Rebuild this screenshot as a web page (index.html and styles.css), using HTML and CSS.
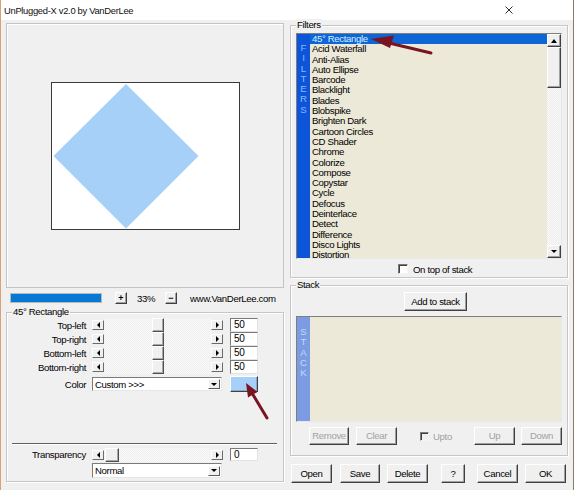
FILE: index.html
```html
<!DOCTYPE html>
<html>
<head>
<meta charset="utf-8">
<title>UnPlugged-X</title>
<link rel="stylesheet" href="styles.css">
</head>
<body>
<div class="window">
  <div class="titlebar">
    <span class="title">UnPlugged-X v2.0 by VanDerLee</span>
    <svg class="close" width="8" height="8" viewBox="0 0 8 8"><path d="M0.5 0.5 L7.5 7.5 M7.5 0.5 L0.5 7.5" stroke="#2b2b2b" stroke-width="1"/></svg>
  </div>
  <div class="main">
    <div class="left">
      <div class="preview">
        <div class="canvas">
          <svg width="187" height="146" viewBox="0 0 187 146"><polygon points="74,1 146.5,73 74,145.5 1.5,73" fill="#a7d0f8"/></svg>
        </div>
      </div>
      <div class="zoomrow">
        <div class="progress"></div>
        <div class="btn tiny plus">+</div>
        <span class="pct">33%</span>
        <div class="btn tiny minus">−</div>
        <span class="url">www.VanDerLee.com</span>
      </div>
      <div class="group params">
        <span class="legend">45° Rectangle</span>
        <div class="row">
          <span class="lbl">Top-left</span>
          <div class="slider"><div class="arr"><i class="tri-l"></i></div><div class="track"><div class="thumb mid"></div></div><div class="arr"><i class="tri-r"></i></div></div>
          <div class="edit">50</div>
        </div>
        <div class="row">
          <span class="lbl">Top-right</span>
          <div class="slider"><div class="arr"><i class="tri-l"></i></div><div class="track"><div class="thumb mid"></div></div><div class="arr"><i class="tri-r"></i></div></div>
          <div class="edit">50</div>
        </div>
        <div class="row">
          <span class="lbl">Bottom-left</span>
          <div class="slider"><div class="arr"><i class="tri-l"></i></div><div class="track"><div class="thumb mid"></div></div><div class="arr"><i class="tri-r"></i></div></div>
          <div class="edit">50</div>
        </div>
        <div class="row">
          <span class="lbl">Bottom-right</span>
          <div class="slider"><div class="arr"><i class="tri-l"></i></div><div class="track"><div class="thumb mid"></div></div><div class="arr"><i class="tri-r"></i></div></div>
          <div class="edit">50</div>
        </div>
        <div class="row colorrow">
          <span class="lbl">Color</span>
          <div class="combo"><span class="combo-text">Custom &gt;&gt;&gt;</span><div class="drop"><i class="tri-d"></i></div></div>
          <div class="swatch"></div>
        </div>
        <div class="sep"></div>
        <div class="row transrow">
          <span class="lbl">Transparency</span>
          <div class="slider"><div class="arr"><i class="tri-l"></i></div><div class="track"><div class="thumb start"></div></div><div class="arr"><i class="tri-r"></i></div></div>
          <div class="edit">0</div>
        </div>
        <div class="combo blend"><span class="combo-text">Normal</span><div class="drop"><i class="tri-d"></i></div></div>
      </div>
    </div>

    <div class="right">
      <div class="group filters">
        <span class="legend">Filters</span>
        <div class="list">
          <div class="bar filters-bar"><span>F</span><span>I</span><span>L</span><span>T</span><span>E</span><span>R</span><span>S</span></div>
          <div class="items">
            <div class="item sel">45° Rectangle</div>
            <div class="item">Acid Waterfall</div>
            <div class="item">Anti-Alias</div>
            <div class="item">Auto Ellipse</div>
            <div class="item">Barcode</div>
            <div class="item">Blacklight</div>
            <div class="item">Blades</div>
            <div class="item">Blobspike</div>
            <div class="item">Brighten Dark</div>
            <div class="item">Cartoon Circles</div>
            <div class="item">CD Shader</div>
            <div class="item">Chrome</div>
            <div class="item">Colorize</div>
            <div class="item">Compose</div>
            <div class="item">Copystar</div>
            <div class="item">Cycle</div>
            <div class="item">Defocus</div>
            <div class="item">Deinterlace</div>
            <div class="item">Detect</div>
            <div class="item">Difference</div>
            <div class="item">Disco Lights</div>
            <div class="item">Distortion</div>
          </div>
          <div class="scrollbar">
            <div class="sb-btn"><i class="tri-u"></i></div>
            <div class="sb-thumb"></div>
            <div class="sb-track"></div>
            <div class="sb-btn"><i class="tri-d"></i></div>
          </div>
        </div>
        <div class="checkrow ontop"><span class="check"></span><span>On top of stack</span></div>
      </div>

      <div class="group stack">
        <span class="legend">Stack</span>
        <div class="btn addbtn">Add to stack</div>
        <div class="list stacklist">
          <div class="bar stack-bar"><span>S</span><span>T</span><span>A</span><span>C</span><span>K</span></div>
          <div class="items"></div>
        </div>
        <div class="stackbtns">
          <div class="btn dis remove">Remove</div>
          <div class="btn dis clear">Clear</div>
          <div class="checkrow upto"><span class="check dis"></span><span class="distext">Upto</span></div>
          <div class="btn dis up">Up</div>
          <div class="btn dis down">Down</div>
        </div>
      </div>

      <div class="bottombtns">
        <div class="btn b-open">Open</div>
        <div class="btn b-save">Save</div>
        <div class="btn b-delete">Delete</div>
        <div class="btn b-help">?</div>
        <div class="btn b-cancel">Cancel</div>
        <div class="btn b-ok">OK</div>
      </div>
    </div>
  </div>

  <svg class="arrows" width="574" height="490" viewBox="0 0 574 490">
    <line x1="431" y1="53" x2="389" y2="43" stroke="#7a1420" stroke-width="3" stroke-linecap="round"/>
    <polygon points="371,39 394,35.5 390,48" fill="#7a1420"/>
    <line x1="267" y1="418" x2="252" y2="393" stroke="#7a1420" stroke-width="3" stroke-linecap="round"/>
    <polygon points="246,383 257.5,392 248,397.5" fill="#7a1420"/>
  </svg>
</div>
</body>
</html>
```

FILE: styles.css
```css
* { box-sizing: border-box; }
html, body { margin: 0; padding: 0; }
body {
  width: 574px;
  height: 490px;
  overflow: hidden;
  background: #f0f0f0;
  font-family: "Liberation Sans", Arial, sans-serif;
  font-size: 9.6px;
  letter-spacing: -0.35px;
  color: #000;
}
.window {
  position: relative;
  width: 574px;
  height: 490px;
  border-left: 1px solid #d9a273;
  border-right: 1px solid #8a7a66;
}
.titlebar {
  height: 20px;
  background: #fff;
  display: flex;
  align-items: center;
  justify-content: space-between;
  padding: 0 60px 0 3px;
  font-size: 9.4px;
  letter-spacing: -0.3px;
  color: #111;
}
.close { display: block; }
.main {
  display: flex;
  gap: 6px;
  padding-left: 5px;
}
.left { width: 278px; display: flex; flex-direction: column; }
.right { width: 278px; display: flex; flex-direction: column; }

/* preview */
.preview {
  margin-top: 3px;
  height: 265px;
  border: 1px solid #c4c4c4;
  box-shadow: inset 1px 1px 0 #fff;
  display: flex;
  align-items: center;
  justify-content: center;
}
.canvas {
  width: 189px;
  height: 148px;
  background: #fff;
  border: 1px solid #3a3a3a;
}
.canvas svg { display: block; }

/* zoom row */
.zoomrow {
  margin-top: 4px;
  height: 12px;
  display: flex;
  align-items: center;
}
.progress {
  margin-left: 4px;
  width: 92px;
  height: 10px;
  background: #0679d6;
  border: 1px solid #b8b8b8;
}
.btn {
  display: flex;
  align-items: center;
  justify-content: center;
  background: #f0f0f0;
  border: 1px solid;
  border-color: #fff #404040 #404040 #fff;
  box-shadow: inset -1px -1px 0 #a0a0a0;
  color: #000;
  line-height: 1;
}
.btn.tiny { width: 12px; height: 12px; font-size: 9px; font-weight: bold; letter-spacing: 0; }
.plus { margin-left: 13px; }
.pct { margin-left: 10px; width: 18px; text-align: center; }
.minus { margin-left: 10px; }
.url { margin-left: 13px; }

/* group boxes */
.group {
  position: relative;
  border: 1px solid #c6c6c6;
  box-shadow: inset 1px 1px 0 #fff, 1px 1px 0 #fff;
}
.legend {
  position: absolute;
  top: -7px;
  left: 5px;
  padding: 0 1px;
  background: #f0f0f0;
  line-height: 12px;
}
.params {
  margin-top: 8px;
  height: 170px;
  padding-top: 5px;
}
.row {
  display: flex;
  align-items: center;
  height: 14px;
}
.lbl { width: 79px; text-align: right; }
.slider {
  margin-left: 6px;
  width: 131px;
  height: 14px;
  display: flex;
  align-items: center;
}
.arr {
  width: 12px;
  height: 10px;
  display: flex;
  align-items: center;
  justify-content: center;
  background: #f0f0f0;
  border: 1px solid;
  border-color: #fff #6a6a6a #6a6a6a #fff;
}
.track {
  flex: 1;
  height: 14px;
  display: flex;
  background: repeating-conic-gradient(#fbfbfb 0 25%, #ededed 0 50%) 0 0 / 2px 2px;
}
.thumb {
  width: 12px;
  height: 14px;
  background: #f0f0f0;
  border: 1px solid;
  border-color: #fff #505050 #505050 #fff;
  box-shadow: inset -1px -1px 0 #a8a8a8;
}
.thumb.mid { margin-left: 48px; }
.thumb.start { margin-left: 1px; width: 14px; }
.tri-l { width: 0; height: 0; border-style: solid; border-width: 3px 3px 3px 0; border-color: transparent #000 transparent transparent; }
.tri-r { width: 0; height: 0; border-style: solid; border-width: 3px 0 3px 3px; border-color: transparent transparent transparent #000; }
.tri-d { width: 0; height: 0; border-style: solid; border-width: 3px 3px 0 3px; border-color: #000 transparent transparent transparent; }
.tri-u { width: 0; height: 0; border-style: solid; border-width: 0 3.5px 4px 3.5px; border-color: transparent transparent #000 transparent; }
.edit {
  margin-left: 7px;
  width: 28px;
  height: 14px;
  background: #fff;
  border: 1px solid;
  border-color: #7a7a7a #e3e3e3 #e3e3e3 #7a7a7a;
  padding-left: 3px;
  line-height: 12px;
  font-size: 10px;
}
.colorrow { margin-top: 2px; height: 16px; }
.combo {
  margin-left: 6px;
  width: 130px;
  height: 14px;
  background: #fff;
  border: 1px solid;
  border-color: #7a7a7a #e6e6e6 #e6e6e6 #7a7a7a;
  display: flex;
  align-items: center;
  padding-left: 2px;
}
.combo-text { flex: 1; }
.drop {
  width: 12px;
  height: 10px;
  margin-right: 1px;
  display: flex;
  align-items: center;
  justify-content: center;
  background: #f0f0f0;
  border: 1px solid;
  border-color: #fff #5a5a5a #5a5a5a #fff;
}
.swatch {
  margin-left: 8px;
  width: 28px;
  height: 16px;
  background: #a7d0f8;
  border: 1px solid;
  border-color: #fff #404040 #404040 #fff;
  box-shadow: inset -1px -1px 0 #8aa8c8;
}
.sep {
  margin: 51px 6px 0 5px;
  height: 2px;
  border-top: 1px solid #5f5f5f;
  border-bottom: 1px solid #fff;
}
.transrow { margin-top: 3px; height: 13px; }
.transrow .edit { height: 13px; }
.combo.blend { margin: 2px 0 0 85px; height: 15px; }

/* right */
.filters {
  margin-top: 5px;
  height: 253px;
}
.list {
  display: flex;
  margin: 7px 0 0 5px;
  width: 266px;
  height: 226px;
  border-top: 1px solid #7e7e7e;
  border-left: 1px solid #7e7e7e;
  border-bottom: 1px solid #e8e8e8;
  border-right: 1px solid #e8e8e8;
  overflow: hidden;
}
.bar {
  width: 13px;
  display: flex;
  flex-direction: column;
  align-items: center;
  font-size: 9.6px;
  letter-spacing: 0;
}
.bar span { height: 10.3px; line-height: 10.3px; }
.filters-bar { background: #0c55d9; color: #8fb6ff; padding-top: 9px; }
.stack-bar { background: #7b9be3; color: #cad8f6; padding-top: 10px; }
.items {
  flex: 1;
  background: #ece9d8;
  overflow: hidden;
}
.item {
  height: 10.3px;
  line-height: 10.3px;
  padding-left: 2px;
  white-space: nowrap;
}
.item.sel { background: #0e66d6; color: #d4f0ff; }
.scrollbar {
  width: 14px;
  display: flex;
  flex-direction: column;
  background: repeating-conic-gradient(#fafafa 0 25%, #ececec 0 50%) 0 0 / 2px 2px;
}
.sb-btn {
  height: 13px;
  display: flex;
  align-items: center;
  justify-content: center;
  background: #f0f0f0;
  border: 1px solid;
  border-color: #fff #404040 #404040 #fff;
  box-shadow: inset -1px -1px 0 #a0a0a0;
}
.sb-thumb {
  height: 41px;
  background: #f0f0f0;
  border: 1px solid;
  border-color: #fff #404040 #404040 #fff;
  box-shadow: inset -1px -1px 0 #a0a0a0;
}
.sb-track { flex: 1; }
.checkrow { display: flex; align-items: center; }
.check {
  width: 10px;
  height: 10px;
  background: #fff;
  border: 1px solid;
  border-color: #7a7a7a #f4f4f4 #f4f4f4 #7a7a7a;
  box-shadow: inset 1px 1px 0 #404040;
}
.check.dis { background: #f0f0f0; width: 9px; height: 9px; }
.ontop { margin: 4px 0 0 107px; height: 12px; gap: 5px; }

.stack {
  margin-top: 7px;
  height: 171px;
}
.addbtn {
  margin: 6px 0 0 113px;
  width: 63px;
  height: 19px;
}
.stacklist {
  margin-top: 5px;
  height: 106px;
}
.stackbtns {
  display: flex;
  align-items: center;
  margin-top: 5px;
  height: 18px;
}
.btn.dis { color: #a2a2a2; }
.stackbtns .btn { height: 18px; width: 41px; }
.remove { margin-left: 18px; width: 40px !important; }
.clear { margin-left: 7px; }
.upto { margin-left: 23px; gap: 4px; }
.distext { color: #a2a2a2; }
.up { margin-left: auto; }
.down { margin-left: 6px; margin-right: 5px; }

.bottombtns {
  display: flex;
  margin-top: 8px;
  height: 19px;
}
.bottombtns .btn { height: 19px; width: 41px; }
.b-open { margin-left: 1px; }
.b-save { margin-left: 8px; width: 40px !important; }
.b-delete { margin-left: 7px; }
.b-help { margin-left: 13px; width: 24px !important; }
.b-cancel { margin-left: 12px; }
.b-ok { margin-left: 7px; }

.arrows {
  position: absolute;
  left: -1px;
  top: 0;
  pointer-events: none;
}
```
